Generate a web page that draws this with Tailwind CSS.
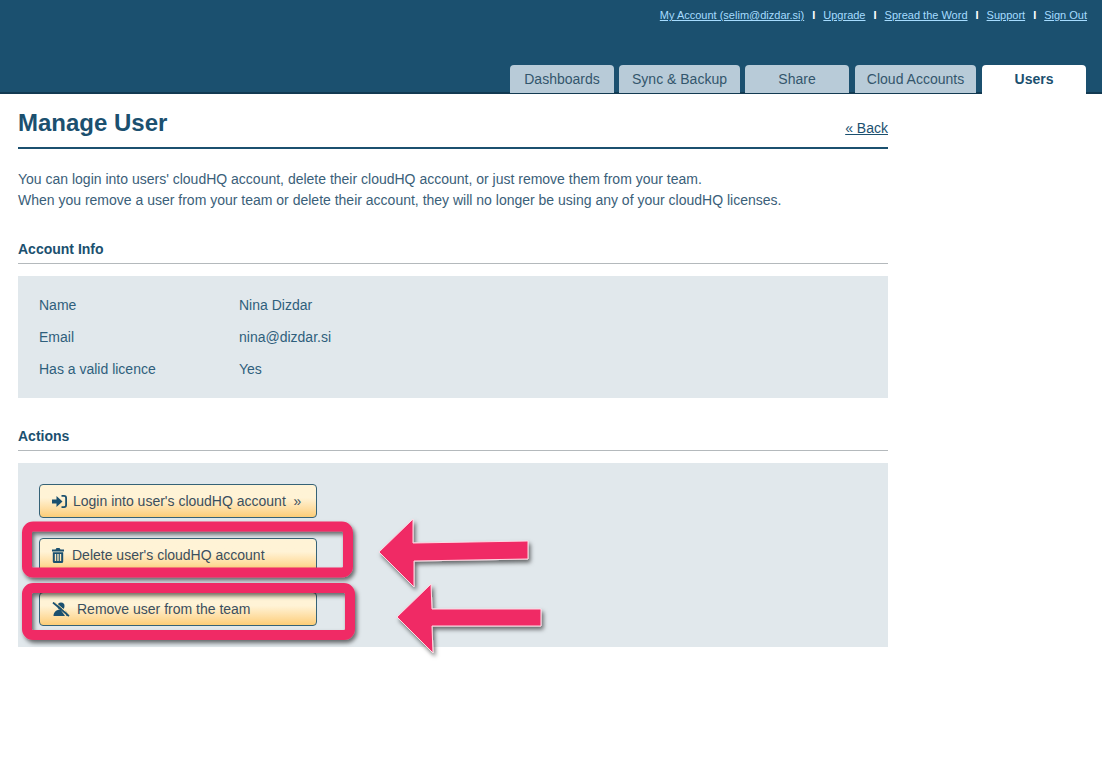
<!DOCTYPE html>
<html>
<head>
<meta charset="utf-8">
<script src="https://cdn.jsdelivr.net/npm/@tailwindcss/browser@4"></script>
</head>
<body class="bg-white font-['Liberation_Sans',Arial,sans-serif] text-[#1b506f] text-[14px]">
<div class="relative w-[1102px] h-[760px] overflow-hidden">
  <header class="h-[94px] bg-[#1b506f] border-b-2 border-[#123a52] flex flex-col">
    <nav class="shrink-0 flex justify-end items-center h-[31px] pr-[15px] text-[11px] font-normal text-[#a6dcff] gap-[8px]">
      <a class="underline">My Account (selim@dizdar.si)</a><span class="text-white font-bold text-[11px]">I</span>
      <a class="underline">Upgrade</a><span class="text-white font-bold text-[11px]">I</span>
      <a class="underline">Spread the Word</a><span class="text-white font-bold text-[11px]">I</span>
      <a class="underline">Support</a><span class="text-white font-bold text-[11px]">I</span>
      <a class="underline">Sign Out</a>
    </nav>
    <div class="shrink-0 flex mt-[34px] ml-[510px] h-[28px] text-[#33566c]">
      <div class="w-[104px] mr-[5px] bg-[#b8cbd8] rounded-t-[4px] flex items-center justify-center">Dashboards</div>
      <div class="w-[121px] mr-[5px] bg-[#b8cbd8] rounded-t-[4px] flex items-center justify-center">Sync &amp; Backup</div>
      <div class="w-[104px] mr-[6px] bg-[#b8cbd8] rounded-t-[4px] flex items-center justify-center">Share</div>
      <div class="w-[121px] mr-[6px] bg-[#b8cbd8] rounded-t-[4px] flex items-center justify-center">Cloud Accounts</div>
      <div class="w-[104px] h-[29px] bg-white rounded-t-[4px] flex items-center justify-center font-bold text-[#1b506f] pb-[1px]">Users</div>
    </div>
  </header>

  <main class="w-[870px] ml-[18px]">
    <div class="flex justify-between items-end h-[55px] border-b-2 border-[#1b506f] pb-[11px]">
      <h1 class="text-[24px] leading-[28px] font-bold relative top-[1px]">Manage User</h1>
      <a class="underline leading-[16px]">« Back</a>
    </div>
    <p class="mt-[20px] leading-[21px] text-[#3a6079]">You can login into users' cloudHQ account, delete their cloudHQ account, or just remove them from your team.<br>When you remove a user from your team or delete their account, they will no longer be using any of your cloudHQ licenses.</p>

    <h2 class="mt-[30px] font-bold leading-[16px] pb-[6px] border-b border-[#b4b9bc]">Account Info</h2>
    <div class="mt-[12px] h-[122px] bg-[#e1e8ec] pl-[21px] pt-[13px] text-[#2f5f7c]">
      <div class="flex h-[32px] items-center"><span class="w-[200px]">Name</span><span>Nina Dizdar</span></div>
      <div class="flex h-[32px] items-center"><span class="w-[200px]">Email</span><span>nina@dizdar.si</span></div>
      <div class="flex h-[32px] items-center"><span class="w-[200px]">Has a valid licence</span><span>Yes</span></div>
    </div>

    <h2 class="mt-[30px] font-bold leading-[16px] pb-[6px] border-b border-[#b4b9bc]">Actions</h2>
    <div class="mt-[12px] h-[184px] bg-[#e1e8ec] pl-[21px] pt-[21px] flex flex-col gap-[20px] text-[#3b4f5e]">
      <button class="w-[278px] h-[34px] rounded-[4px] border border-[#356277] bg-gradient-to-b from-[#fff3d6] from-40% to-[#fdcd77] flex items-center pl-[12px]">
        <svg class="w-[15px] h-[13px] mr-[6px]" viewBox="0 0 15 13" fill="#1b506f"><path d="M0 4.500h4.500V1L10.500 6.500 4.500 12V8.500H0z"/><path d="M9.500 0H12a3 3 0 0 1 3 3v7a3 3 0 0 1-3 3H9.500v-1.800H12a1.200 1.200 0 0 0 1.200-1.200V3A1.200 1.200 0 0 0 12 1.800H9.500z"/></svg>
        Login into user's cloudHQ account&nbsp; »
      </button>
      <button class="w-[278px] h-[34px] rounded-[4px] border border-[#356277] bg-gradient-to-b from-[#fff3d6] from-40% to-[#fdcd77] flex items-center pl-[12px]">
        <svg class="w-[12px] h-[15px] mr-[8px]" viewBox="0 0 12 15" fill="#1b506f"><path d="M0 1.500h3.500L4.500 0h3l1 1.500H12v2H0z"/><path fill-rule="evenodd" d="M.8 4.200h10.400v9.300A1.500 1.500 0 0 1 9.700 15H2.300A1.500 1.500 0 0 1 .8 13.500zM2.800 6v7h1.400V6zM5.300 6v7h1.400V6zM7.800 6v7h1.400V6z"/></svg>
        Delete user's cloudHQ account
      </button>
      <button class="w-[278px] h-[34px] rounded-[4px] border border-[#356277] bg-gradient-to-b from-[#fff3d6] from-40% to-[#fdcd77] flex items-center pl-[12px]">
        <svg class="w-[18px] h-[15px] mr-[7px]" viewBox="0 0 18 15" fill="#1b506f"><circle cx="9" cy="4" r="3.500"/><path d="M1.500 14c0-4 3-6.500 7-6.500L13 14z"/><path d="M13 8.500c2 1 3 3 3 5.500h-1.500z"/><path d="M1 .5 17 14" stroke="#1b506f" stroke-width="1.800"/><path d="M2.300 -.5 18 13" stroke="#fde2a8" stroke-width="1"/></svg>
        Remove user from the team
      </button>
    </div>
  </main>

  <!-- hand-drawn annotations over the page -->
  <svg class="absolute left-0 top-0 pointer-events-none" width="1102" height="760" viewBox="0 0 1102 760">
    <defs>
      <filter id="s" x="-20%" y="-20%" width="140%" height="140%"><feDropShadow dx="2" dy="3" stdDeviation="2" flood-color="#000" flood-opacity=".55"/></filter>
    </defs>
    <g fill="none" stroke="#f02c65" stroke-width="10" filter="url(#s)">
      <rect x="27" y="526.500" width="321" height="46" rx="6"/>
      <rect x="27" y="588" width="323" height="47" rx="6"/>
    </g>
    <g fill="#f02c65" stroke="#ffd9e4" stroke-width="1" filter="url(#s)">
      <path d="M413 519 379 552 414 587 414 561 528 559 528 541 413 543z"/>
      <path d="M431 584 397 617 433 653 432 626 541 626 541 609 432 609z"/>
    </g>
  </svg>
</div>
</body>
</html>
